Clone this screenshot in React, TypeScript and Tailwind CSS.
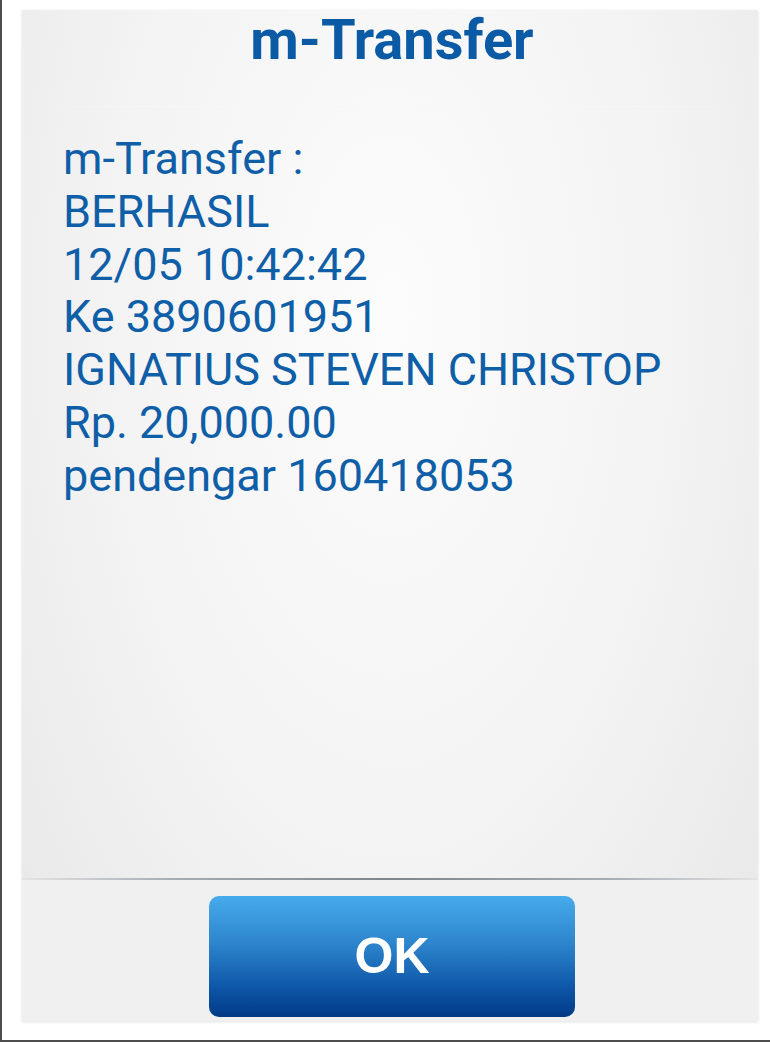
import React from 'react';

const lines = [
  'm-Transfer :',
  'BERHASIL',
  '12/05 10:42:42',
  'Ke 3890601951',
  'IGNATIUS STEVEN CHRISTOP',
  'Rp. 20,000.00',
  'pendengar 160418053',
];

export default function App() {
  return (
    <div className="w-[770px] h-[1042px] bg-white border-l-2 border-b-2 border-[#4d4d4d] pt-[10px] pl-[20px] font-['Roboto',sans-serif]">
      <div className="w-[736px] h-[1011px] flex flex-col bg-[radial-gradient(ellipse_at_50%_30%,#fcfcfc_0%,#f3f3f3_55%,#e7e7e7_100%)] shadow-[0_1px_3px_rgba(0,0,0,0.12)]">
        {/* Header */}
        <div className="h-[96px] flex justify-center pl-[4px]">
          <h1 className="text-[56px] leading-[60px] font-bold text-[#0a5aa5]">
            m-Transfer
          </h1>
        </div>
        <div className="h-px mx-[10px] bg-[linear-gradient(90deg,transparent,#f7f7f7_20%,#f7f7f7_80%,transparent)]" />

        {/* Message */}
        <div className="flex-1 pt-[26px] pl-[41px] text-[45px] leading-[52.8px] text-[#0f5fa8]">
          {lines.map((l) => (
            <div key={l}>{l}</div>
          ))}
        </div>

        {/* Footer */}
        <div className="h-[2px] bg-[linear-gradient(90deg,#e4e4e4_0%,#a8adb3_20%,#7e848a_50%,#a8adb3_80%,#e4e4e4_100%)]" />
        <div className="h-[141px] flex justify-center pt-[16px] pl-[4px] bg-[#f0f0f0]">
          <button className="w-[366px] h-[121px] rounded-[10px] bg-[linear-gradient(180deg,#47abea_0%,#2c84cc_40%,#0f57a8_75%,#003a86_100%)] text-white font-bold text-[50px] font-['Liberation_Sans',sans-serif]">
            OK
          </button>
        </div>
      </div>
    </div>
  );
}
